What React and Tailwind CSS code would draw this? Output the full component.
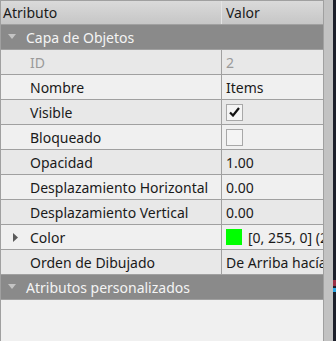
import React from "react";

const rows = [
  { name: "ID", value: "2", disabled: true },
  { name: "Nombre", value: "Items" },
  { name: "Visible", check: true },
  { name: "Bloqueado", check: false },
  { name: "Opacidad", value: "1.00" },
  { name: "Desplazamiento Horizontal", value: "0.00" },
  { name: "Desplazamiento Vertical", value: "0.00" },
  { name: "Color", value: "[0, 255, 0] (255)", swatch: "#00ff00", expand: true },
  { name: "Orden de Dibujado", value: "De Arriba hacía Abajo" },
];

const DownArrow = () => (
  <svg width="8" height="6" viewBox="0 0 8 6" className="shrink-0">
    <polygon points="0,0 8,0 4,5" fill="#c4c4c4" />
  </svg>
);

const RightArrow = () => (
  <svg width="6" height="9" viewBox="0 0 6 9" className="shrink-0">
    <polygon points="0,0 5,4.5 0,9" fill="#5a5a5a" />
  </svg>
);

const GroupRow = ({ label }) => (
  <div className="flex h-[25px] shrink-0 items-center gap-[10px] border-b border-[#a0a0a0] bg-[#8a8a8a] pl-[7px] text-[#f4f4f4]">
    <DownArrow />
    <span className="whitespace-nowrap">{label}</span>
  </div>
);

const CheckBox = ({ checked }) => (
  <div className="flex h-[17px] w-[17px] items-center justify-center border border-[#a8a8a8] bg-[#f4f4f4]">
    {checked && (
      <svg width="11" height="10" viewBox="0 0 11 10">
        <path d="M1 5.5 L4 8.5 L10 1" stroke="#111" strokeWidth="2.2" fill="none" />
      </svg>
    )}
  </div>
);

export default function App() {
  return (
    <div
      className="flex h-[341px] w-[336px] overflow-hidden bg-[#f0f0f0] text-[14px] text-[#1a1a1a]"
      style={{ fontFamily: '"Noto Sans", "Open Sans", sans-serif' }}
    >
      <div className="flex w-[324px] shrink-0 flex-col overflow-hidden border-x border-[#a0a0a0]">
        {/* header */}
        <div className="grid h-[25px] shrink-0 grid-cols-[221px_1fr] border-y border-[#a0a0a0] bg-gradient-to-b from-[#dadada] to-[#c6c6c6]">
          <div className="flex items-center border-r border-[#e4e4e4] pl-[2px]">Atributo</div>
          <div className="flex items-center pl-[4px]">Valor</div>
        </div>

        <GroupRow label="Capa de Objetos" />

        {rows.map((r, i) => (
          <div
            key={r.name}
            className={`grid h-[25px] shrink-0 grid-cols-[221px_1fr] border-b border-[#a0a0a0] ${
              i % 2 === 0 ? "bg-[#e8e8e8]" : "bg-[#f0f0f0]"
            }`}
          >
            <div className="flex items-center border-r border-[#a0a0a0]">
              <div className="flex w-[29px] shrink-0 justify-center">{r.expand && <RightArrow />}</div>
              <span className={`whitespace-nowrap ${r.disabled ? "text-[#9a9a9a]" : ""}`}>{r.name}</span>
            </div>
            <div className="flex items-center gap-[6px] overflow-hidden pl-[4px] whitespace-nowrap">
              {r.check !== undefined ? (
                <CheckBox checked={r.check} />
              ) : (
                <>
                  {r.swatch && <div className="h-[16px] w-[16px] shrink-0 bg-[#00ff00]" />}
                  <span className={r.disabled ? "text-[#9a9a9a]" : ""}>{r.value}</span>
                </>
              )}
            </div>
          </div>
        ))}

        <GroupRow label="Atributos personalizados" />
        <div className="flex-1 bg-[#f0f0f0]" />
      </div>
      <div className="w-[9px] shrink-0 bg-[#c2c2c2]" />
      <div className="relative flex-1 bg-[#1c1f2a]">
        <div className="absolute left-0 top-[280px] h-[6px] w-full bg-[#9a2f45]" />
        <div className="absolute left-0 top-[288px] h-[4px] w-full bg-[#2aa4e0]" />
      </div>
    </div>
  );
}
